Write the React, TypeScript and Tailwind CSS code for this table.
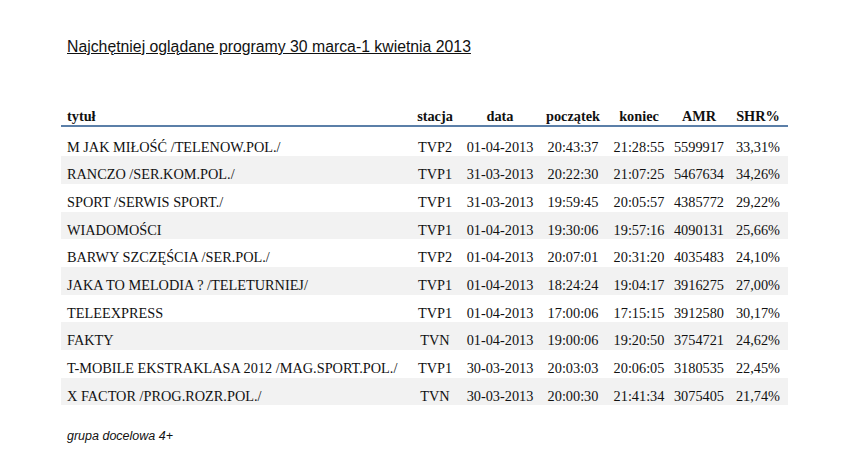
import React from 'react';

const rows = [
  ['M JAK MIŁOŚĆ /TELENOW.POL./', 'TVP2', '01-04-2013', '20:43:37', '21:28:55', '5599917', '33,31%'],
  ['RANCZO /SER.KOM.POL./', 'TVP1', '31-03-2013', '20:22:30', '21:07:25', '5467634', '34,26%'],
  ['SPORT /SERWIS SPORT./', 'TVP1', '31-03-2013', '19:59:45', '20:05:57', '4385772', '29,22%'],
  ['WIADOMOŚCI', 'TVP1', '01-04-2013', '19:30:06', '19:57:16', '4090131', '25,66%'],
  ['BARWY SZCZĘŚCIA /SER.POL./', 'TVP2', '01-04-2013', '20:07:01', '20:31:20', '4035483', '24,10%'],
  ['JAKA TO MELODIA ? /TELETURNIEJ/', 'TVP1', '01-04-2013', '18:24:24', '19:04:17', '3916275', '27,00%'],
  ['TELEEXPRESS', 'TVP1', '01-04-2013', '17:00:06', '17:15:15', '3912580', '30,17%'],
  ['FAKTY', 'TVN', '01-04-2013', '19:00:06', '19:20:50', '3754721', '24,62%'],
  ['T-MOBILE EKSTRAKLASA 2012 /MAG.SPORT.POL./', 'TVP1', '30-03-2013', '20:03:03', '20:06:05', '3180535', '22,45%'],
  ['X FACTOR /PROG.ROZR.POL./', 'TVN', '30-03-2013', '20:00:30', '21:41:34', '3075405', '21,74%'],
];

const headers = ['tytuł', 'stacja', 'data', 'początek', 'koniec', 'AMR', 'SHR%'];

const cols = 'grid grid-cols-[347px_54px_76px_70px_62px_58px_60px]';

export default function App() {
  return (
    <div className="w-[850px] h-[455px] bg-white text-[#111]">
      {/* Title */}
      <div className="pl-[67px] pt-[38px] leading-[18px] font-['Liberation_Sans',Arial,sans-serif]">
        <span className="text-[15.8px] leading-[18px] underline">
          Najchętniej oglądane programy 30 marca-1 kwietnia 2013
        </span>
      </div>

      {/* Table */}
      <div className="ml-[61px] w-[727px] mt-[52px] font-['Liberation_Serif','Times_New_Roman',serif] text-[14.3px] leading-[16px]">
        <div className={`${cols} font-bold pb-[1px] border-b-2 border-[#5b7fa8]`}>
          {headers.map((h, i) => (
            <div key={h} className={i === 0 ? 'pl-[6px] text-left' : 'text-center'}>
              {h}
            </div>
          ))}
        </div>
        <div className="mt-[1.6px]">
          {rows.map((r, ri) => (
            <div
              key={ri}
              className={`${cols} h-[27.7px] pt-[10px] ${ri % 2 === 1 ? 'bg-[#f2f2f2]' : 'bg-white'}`}
            >
              {r.map((c, ci) => (
                <div key={ci} className={ci === 0 ? 'pl-[6px] text-left whitespace-nowrap' : 'text-center whitespace-nowrap'}>
                  {c}
                </div>
              ))}
            </div>
          ))}
        </div>
      </div>

      {/* Footer */}
      <div className="pl-[67px] mt-[24px] font-['Liberation_Sans',Arial,sans-serif] italic text-[12.5px] leading-[14px]">
        grupa docelowa 4+
      </div>
    </div>
  );
}
